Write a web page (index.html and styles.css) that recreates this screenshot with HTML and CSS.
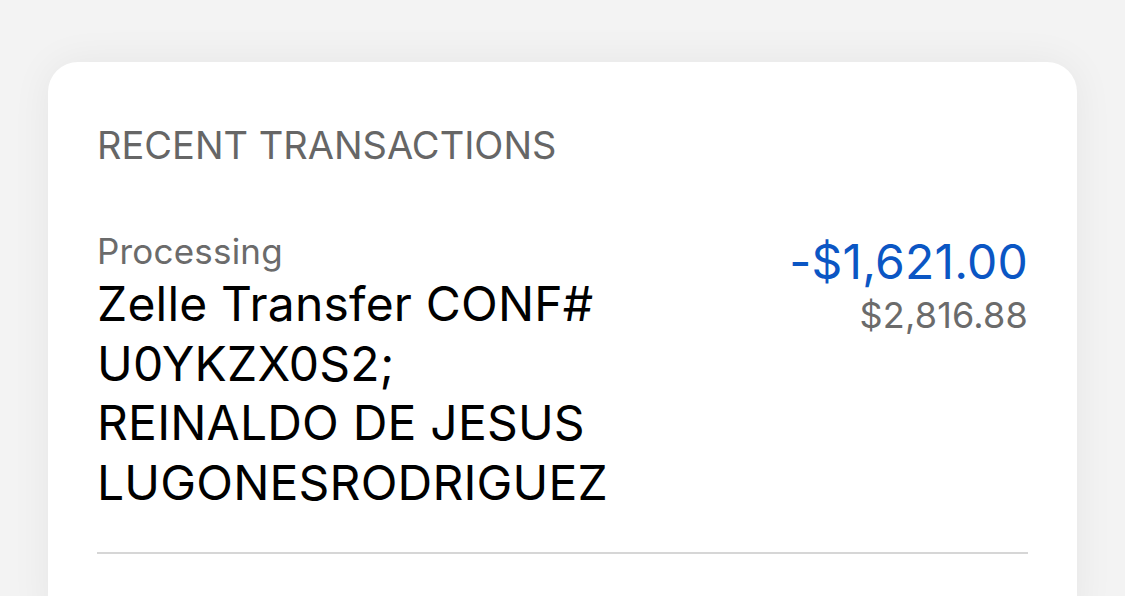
FILE: index.html
```html
<!DOCTYPE html>
<html lang="en">
<head>
<meta charset="utf-8">
<title>Recent Transactions</title>
<link rel="stylesheet" href="styles.css">
</head>
<body>
  <main class="card">
    <h2 class="card-title">RECENT TRANSACTIONS</h2>
    <div class="txn">
      <div class="txn-info">
        <div class="txn-status">Processing</div>
        <div class="txn-desc">Zelle Transfer CONF#<br>U0YKZX0S2;<br>REINALDO DE JESUS<br>LUGONESRODRIGUEZ</div>
      </div>
      <div class="txn-amounts">
        <div class="txn-amount">-$1,621.00</div>
        <div class="txn-balance">$2,816.88</div>
      </div>
    </div>
    <hr class="divider">
  </main>
</body>
</html>
```
FILE: styles.css
```css
html, body {
  margin: 0;
  padding: 0;
}
body {
  background: #f3f3f3;
  font-family: Inter, "Open Sans", Roboto, sans-serif;
  padding: 62px 48px 0 48px;
  height: 596px;
  box-sizing: border-box;
  overflow: hidden;
}
.card {
  background: #fff;
  border-radius: 30px;
  box-shadow: 0 0 40px rgba(0, 0, 0, 0.06);
  padding: 60px 49px 80px 49px;
  box-sizing: border-box;
}
.card-title {
  margin: 0;
  font-size: 38px;
  font-weight: 400;
  color: #666666;
  line-height: 46px;
  letter-spacing: 0;
}
.txn {
  display: flex;
  justify-content: space-between;
  align-items: flex-start;
  margin-top: 60px;
}
.txn-status {
  font-size: 35px;
  color: #6b6b6b;
  line-height: 46px;
  letter-spacing: 0.2px;
}
.txn-desc {
  font-size: 48px;
  color: #000;
  line-height: 59.5px;
  letter-spacing: 0.2px;
}
.txn-amounts {
  text-align: right;
  padding-top: 6px;
}
.txn-amount {
  font-size: 48px;
  color: #0b56c4;
  line-height: 56px;
  letter-spacing: 0.2px;
}
.txn-balance {
  font-size: 36px;
  color: #6b6b6b;
  line-height: 50px;
  letter-spacing: 0.2px;
}
.divider {
  border: 0;
  border-top: 2px solid #d6d6d6;
  margin: 40px 0 0 0;
}
```
